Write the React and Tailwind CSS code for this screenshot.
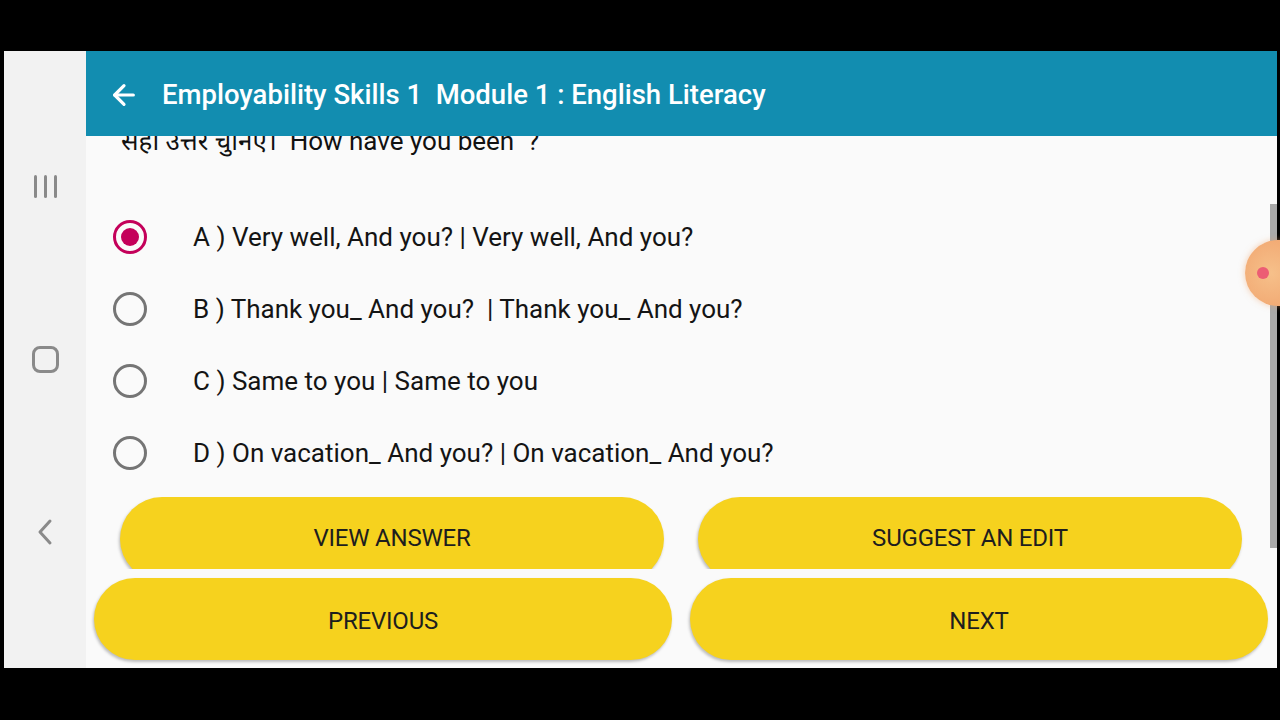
import React from 'react';
import { ArrowLeft } from 'lucide-react';

const options = [
    { key: 'A', text: 'Very well, And you? | Very well, And you?', checked: true },
    { key: 'B', text: 'Thank you_ And you?  | Thank you_ And you?' },
    { key: 'C', text: 'Same to you | Same to you' },
    { key: 'D', text: 'On vacation_ And you? | On vacation_ And you?' },
];

function Radio({ checked }) {
    if (checked) {
        return (
            <div className="w-[34px] h-[34px] rounded-full border-[3px] border-[#c4005a] flex items-center justify-center shrink-0">
                <div className="w-[18px] h-[18px] rounded-full bg-[#c4005a]" />
            </div>
        );
    }
    return <div className="w-[34px] h-[34px] rounded-full border-[3px] border-[#757575] shrink-0" />;
}

function YellowButton({ label, className = '' }) {
    return (
        <button
            className={`rounded-full bg-[#f6d21e] text-[#1e1e1e] text-[24px] uppercase tracking-[-0.2px] shadow-[-1px_2px_3px_rgba(0,0,0,0.25)] ${className}`}
        >
            {label}
        </button>
    );
}

function NavBar() {
    return (
        <div className="w-[82px] bg-[#f2f2f2] flex flex-col items-center">
            {/* recents */}
            <div className="mt-[124px] flex gap-[7px] pl-[1px]">
                <div className="w-[3px] h-[23px] bg-[#8a8a8a] rounded-full" />
                <div className="w-[3px] h-[23px] bg-[#8a8a8a] rounded-full" />
                <div className="w-[3px] h-[23px] bg-[#8a8a8a] rounded-full" />
            </div>
            {/* home */}
            <div className="mt-[148px] w-[27px] h-[27px] rounded-[8px] border-[3px] border-[#8a8a8a]" />
            {/* back */}
            <svg className="mt-[145px]" width="20" height="28" viewBox="0 0 20 28" fill="none">
                <path d="M15 3 L5 14 L15 25" stroke="#8a8a8a" strokeWidth="3" strokeLinecap="round" strokeLinejoin="round" />
            </svg>
        </div>
    );
}

export default function App() {
    return (
        <div
            className="w-[1280px] h-[720px] bg-black pt-[51px] pl-[4px] pr-[3px] relative overflow-hidden"
            style={{ fontFamily: 'Roboto, "Noto Sans", "Noto Sans Devanagari", sans-serif' }}
        >
            <div className="h-[617px] flex overflow-hidden">
                <NavBar />

                <div className="flex-1 flex flex-col bg-[#fafafa] overflow-hidden">
                    {/* App bar */}
                    <div className="h-[85px] bg-[#128db0] flex items-center pl-[22px] pt-[3px] shrink-0 relative z-10">
                        <ArrowLeft className="text-white" size={32} strokeWidth={2.4} />
                        <h1 className="ml-[22px] text-white text-[27.5px] font-medium whitespace-pre">
                            Employability Skills 1  Module 1 : English Literacy
                        </h1>
                    </div>

                    {/* Content */}
                    <div className="flex-1 flex flex-col overflow-hidden">
                        <p className="mt-[-12px] pl-[35px] text-[26px] leading-[34px] text-[#111] whitespace-pre">
                            सही उत्तर चुनिए।  How have you been  ?
                        </p>

                        <div className="mt-[43px] flex flex-col">
                            {options.map((o) => (
                                <div key={o.key} className="h-[72px] flex items-center pl-[27px]">
                                    <Radio checked={o.checked} />
                                    <span className="ml-[46px] text-[26px] text-[#141414] whitespace-pre">
                                        {o.key} ) {o.text}
                                    </span>
                                </div>
                            ))}
                        </div>

                        <div className="mt-[8px] h-[72px] shrink-0 flex gap-[34px] pl-[34px] pr-[35px] overflow-hidden">
                            <YellowButton label="View Answer" className="flex-1 h-[84px] pb-[2px]" />
                            <YellowButton label="Suggest an Edit" className="flex-1 h-[84px] pb-[2px]" />
                        </div>

                        <div className="mt-[9px] h-[82px] shrink-0 flex gap-[18px] pl-[8px] pr-[9px]">
                            <YellowButton label="Previous" className="flex-1 h-[82px] pt-[4px]" />
                            <YellowButton label="Next" className="flex-1 h-[82px] pt-[4px]" />
                        </div>
                    </div>
                </div>
            </div>

            {/* scrollbar */}
            <div className="absolute left-[1270px] top-[204px] w-[7px] h-[344px] bg-[#a9a9a9]" />

            {/* floating recorder bubble */}
            <div className="absolute left-[1245px] top-[240px] w-[66px] h-[66px] rounded-full bg-[radial-gradient(circle_at_40%_50%,#f6c08a,#f0a06a)] shadow-[0_0_6px_rgba(240,160,100,0.5)] flex items-center pl-[12px]">
                <div className="w-[12px] h-[12px] rounded-full bg-[#ec5d74]" />
            </div>
        </div>
    );
}
